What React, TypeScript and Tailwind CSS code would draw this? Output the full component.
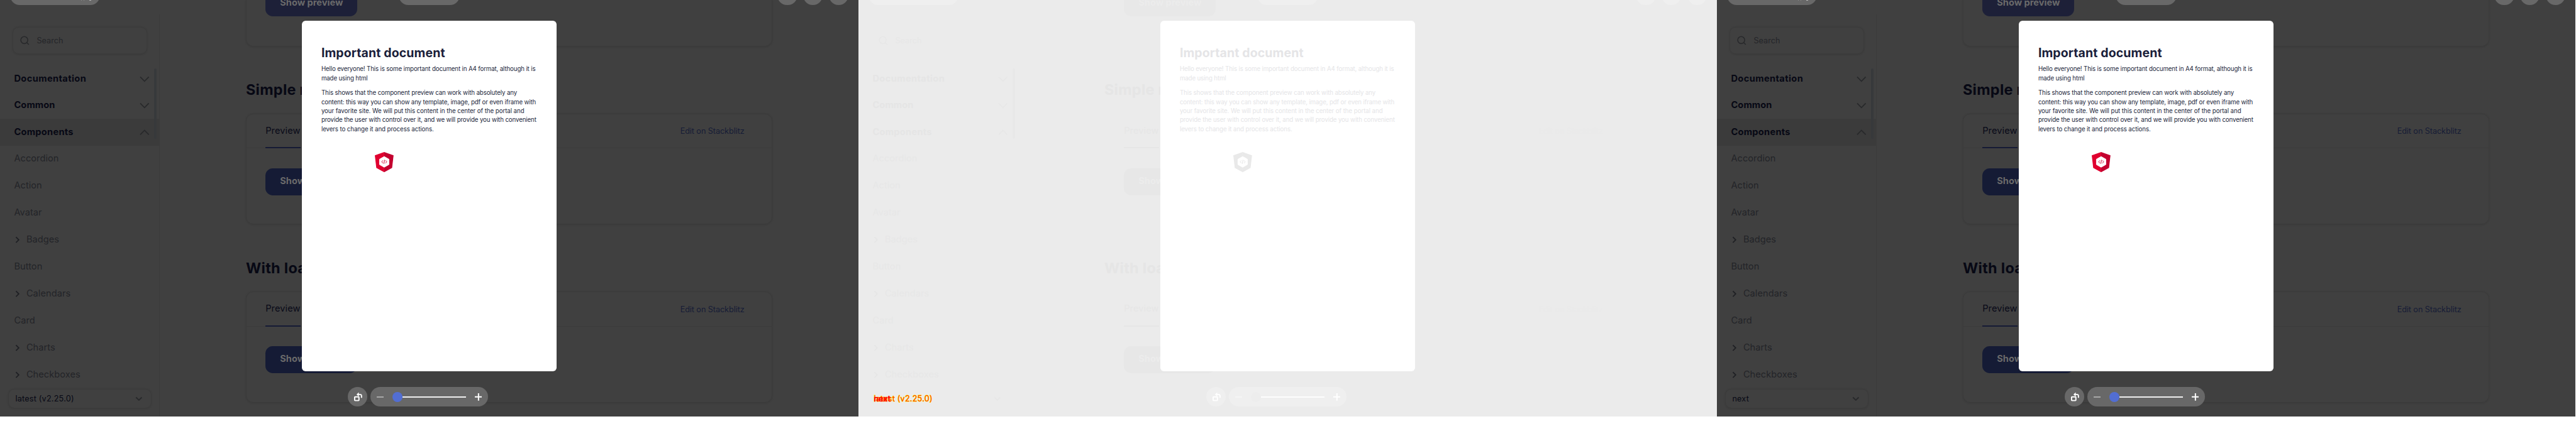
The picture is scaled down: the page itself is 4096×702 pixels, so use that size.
type Tone = "dark" | "light";

const tones = {
  dark: {
    page: "bg-[#404040]",
    line: "border-[#3b3b3b]",
    shadow: "shadow-[0_1px_3px_rgba(0,0,0,0.12)]",
    strong: "text-[#070814]",
    item: "text-[#232428]",
    search: "text-[#242529]",
    icon: "text-[#28292b]",
    caret: "text-[#1f2024]",
    active: "bg-[#3b3b3b]",
    thumb: "bg-[#37393b]",
    tab: "text-[#090a18]",
    underline: "bg-[#151b35]",
    button: "bg-[#151b35] text-[#6a6a6a]",
    buttonHover: "bg-[#1d2038] text-[#6a6a6a]",
    link: "text-[#161c36]",
    chip: "bg-[#686868]",
    doc: "text-[#1b1f3b]",
    minus: "bg-[#a8a8a8]",
    track: "bg-[#f0f0f0]",
    knob: "bg-[#526ed3]",
  },
  light: {
    page: "bg-[#ebebeb]",
    line: "border-transparent",
    shadow: "shadow-none",
    strong: "text-[#e5e5e5]",
    item: "text-[#e7e7e7]",
    search: "text-[#e7e7e7]",
    icon: "text-[#e7e7e7]",
    caret: "text-[#e6e6e6]",
    active: "bg-transparent",
    thumb: "bg-[#e8e8e8]",
    tab: "text-[#e6e6e6]",
    underline: "bg-[#e6e6e6]",
    button: "bg-[#e7e7e7] text-[#ececec]",
    buttonHover: "bg-[#e8e8e8] text-[#ececec]",
    link: "text-[#eaeaea]",
    chip: "bg-[#efefef]",
    doc: "text-[#e5e5e7]",
    minus: "bg-[#f5f5f5]",
    track: "bg-[#fdfdfd]",
    knob: "bg-[#ededed]",
  },
};

function Chevron({ up }: { up?: boolean }) {
  return (
    <svg className="h-[10px] w-[16px]" viewBox="0 0 16 10" fill="none" stroke="currentColor" strokeWidth="1.8">
      <path d={up ? "M1 8.5 8 1.5l7 7" : "M1 1.5l7 7 7-7"} />
    </svg>
  );
}

function Caret() {
  return (
    <svg className="h-[12px] w-[8px]" viewBox="0 0 8 12" fill="none" stroke="currentColor" strokeWidth="1.8">
      <path d="M1.5 1.5 6 6l-4.500 4.500" />
    </svg>
  );
}

const groups = [
  { name: "Documentation", cls: "h-[43px] tracking-[0.41px]", up: false },
  { name: "Common", cls: "h-[43px] tracking-[0.1px]", up: false },
  { name: "Components", cls: "h-[44px] tracking-[0.28px]", up: true },
];

const items = [
  { name: "Accordion", sub: false },
  { name: "Action", sub: false },
  { name: "Avatar", sub: false },
  { name: "Badges", sub: true },
  { name: "Button", sub: false },
  { name: "Calendars", sub: true },
  { name: "Card", sub: false },
  { name: "Charts", sub: true },
  { name: "Checkboxes", sub: true },
];

function Version({ kind }: { kind: string }) {
  if (kind === "diff")
    return (
      <span className="grid text-[13px] leading-[18px] tracking-[0.21px]">
        <span className="col-start-1 row-start-1 text-[#ff3c00] [-webkit-text-stroke:0.9px_#ffee00] [paint-order:stroke_fill]">latest (v2.25.0)</span>
        <span className="col-start-1 row-start-1 text-[#ff0000] [-webkit-text-stroke:0.7px_#ff0000]">next</span>
      </span>
    );
  return <span className="text-[13px] leading-[18px] tracking-[0.21px]">{kind}</span>;
}

function Sidebar({ tone, version }: { tone: Tone; version: string }) {
  const t = tones[tone];
  return (
    <aside className={`relative mt-[24px] flex w-[261px] shrink-0 flex-col border-r pt-[20px] ${t.line}`}>
      <div className={`ml-[20px] flex h-[44px] w-[220px] items-center rounded-[10px] border pl-[12px] ${t.line} ${t.shadow}`}>
        <svg className={`h-[16px] w-[16px] ${t.icon}`} viewBox="0 0 16 16" fill="none" stroke="currentColor" strokeWidth="1.6">
          <circle cx="6.800" cy="7" r="5.700" />
          <path d="M11 11.200 14.200 14.400" />
        </svg>
        <span className={`ml-[11px] text-[13px] tracking-[-0.02px] ${t.search}`}>Search</span>
      </div>
      <nav className="mt-[20px]">
        {groups.map((g) => (
          <div key={g.name} className={`flex items-center justify-between pr-[16px] pl-[23px] text-[15px] font-bold ${g.cls} ${t.strong} ${g.up ? t.active : ""}`}>
            {g.name}
            <span className={t.icon}>
              <Chevron up={g.up} />
            </span>
          </div>
        ))}
        {items.map((i) => (
          <div key={i.name} className={`flex h-[44px] items-center pl-[23px] text-[15px] tracking-[0.04px] ${t.item}`}>
            {i.sub && (
              <span className={`mr-[10px] ml-[2px] ${t.caret}`}>
                <Caret />
              </span>
            )}
            {i.name}
          </div>
        ))}
      </nav>
      <div className={`mt-[1px] ml-[13px] flex h-[32px] w-[234px] items-center justify-between rounded-[10px] border pr-[13px] pl-[11px] ${t.line} ${t.shadow} ${t.strong}`}>
        <Version kind={version} />
        <svg className={`h-[8px] w-[12px] ${t.icon}`} viewBox="0 0 12 8" fill="none" stroke="currentColor" strokeWidth="2">
          <path d="M1.300 1.500 6 6l4.700-4.500" />
        </svg>
      </div>
      <div className={`absolute top-[88px] left-[251px] h-[115px] w-[4px] rounded-full ${t.thumb}`} />
    </aside>
  );
}

function Section({ tone, title }: { tone: Tone; title: string }) {
  const t = tones[tone];
  return (
    <section>
      <div className="h-[109.5px] pt-[52.5px]">
        <h2 className={`text-[24px] leading-[36px] font-bold tracking-[0.3px] ${t.strong}`}>{title}</h2>
      </div>
      <div className={`h-[181px] rounded-[12px] border ${t.line} ${t.shadow}`}>
        <div className={`flex h-[56px] items-stretch justify-between border-b pr-[45px] pl-[31px] ${t.line}`}>
          <div className="-mb-px flex flex-col justify-between">
            <span className={`pt-[17.5px] text-[15px] leading-[20px] tracking-[0.08px] ${t.tab}`}>Preview</span>
            <span className={`h-[2px] w-[57px] ${t.underline}`} />
          </div>
          <span className={`pt-[18px] text-[13px] leading-[20px] tracking-[-0.08px] ${t.link}`}>Edit on Stackblitz</span>
        </div>
        <div className={`mt-[32px] ml-[31px] flex h-[44px] w-[150px] items-center justify-center rounded-[12px] text-[15px] font-bold ${t.button}`}>Show preview</div>
      </div>
    </section>
  );
}

const paragraphs = [
  [
    { text: "Hello everyone! This is some important document in A4 format, although it is", cls: "tracking-[-0.16px]" },
    { text: "made using html", cls: "tracking-[-0.16px]" },
  ],
  [
    { text: "This shows that the component preview can work with absolutely any", cls: "tracking-[-0.14px]" },
    { text: "content: this way you can show any template, image, pdf or even iframe with", cls: "tracking-[-0.16px]" },
    { text: "your favorite site. We will put this content in the center of the portal and", cls: "tracking-[-0.09px]" },
    { text: "provide the user with control over it, and we will provide you with convenient", cls: "tracking-[-0.14px]" },
    { text: "levers to change it and process actions.", cls: "tracking-[-0.11px]" },
  ],
];

function Logo({ tone }: { tone: Tone }) {
  const d = tone === "dark";
  return (
    <svg className="mt-[30px] ml-[87px] h-[33px] w-[31px]" viewBox="0 0 31 33">
      <path d="M15.300 0 0 5.400 2.400 25.800 15.300 33z" fill={d ? "#e0002f" : "#e9e9e9"} />
      <path d="M15.300 0 30.600 5.400 28.200 25.800 15.300 33z" fill={d ? "#c3002f" : "#e9e9e9"} />
      <path d="M15.300 7.400 23 11.700v8.800l-7.700 4.300-7.700-4.300v-8.800z" fill="#fff" stroke="#fff" strokeWidth="1" strokeLinejoin="round" />
      <path d="M13.200 13.700 11.300 16l1.900 2.300M17.500 13.700l1.900 2.300-1.900 2.300M15.900 12.800l-1.100 6.400" fill="none" stroke={d ? "#d0002f" : "#e3e3e3"} strokeWidth="1" />
    </svg>
  );
}

function Panel({ tone, version }: { tone: Tone; version: string }) {
  const t = tones[tone];
  return (
    <div className={`relative flex h-[680px] w-[1400px] shrink-0 overflow-hidden ${t.page}`}>
      <Sidebar tone={tone} version={version} />
      <main className="ml-[140px] w-[859px]">
        <div className={`flex h-[76px] rounded-b-[12px] border border-t-0 pl-[31px] ${t.line} ${t.shadow}`}>
          <div className={`-mt-[17px] flex h-[44px] w-[150px] items-center justify-center rounded-[12px] text-[15px] font-bold ${t.buttonHover}`}>Show preview</div>
        </div>
        <Section tone={tone} title="Simple modal" />
        <Section tone={tone} title="With loading" />
      </main>

      <header className="absolute top-[-24px] left-0 flex h-[32px] w-full items-stretch pr-[16px] pl-[16px]">
        <div className={`flex w-[147px] items-end rounded-full pb-[7px] pl-[116px] ${t.chip}`}>
          {tone === "dark" && (
            <span className="flex gap-[3px]">
              <i className="h-[1px] w-[1px] bg-[#8a8a8a]" />
              <i className="h-[1px] w-[1px] bg-[#8a8a8a]" />
              <i className="ml-[6px] h-[1px] w-[3px] bg-[#b5b5b5]" />
            </span>
          )}
        </div>
        <div className={`ml-[487px] w-[100px] rounded-full ${t.chip}`} />
        <div className="ml-auto flex gap-[10px]">
          <div className={`w-[32px] rounded-full ${t.chip}`} />
          <div className={`w-[32px] rounded-full ${t.chip}`} />
          <div className={`w-[32px] rounded-full ${t.chip}`} />
        </div>
      </header>

      <article className={`absolute top-[34px] left-[492px] h-[572px] w-[416px] rounded-[6px] bg-white pt-[40px] pl-[32px] ${t.doc}`}>
        <h1 className="text-[20px] leading-[26px] font-bold tracking-[0.11px]">Important document</h1>
        {paragraphs.map((p, i) => (
          <p key={i} className={`text-[10px] leading-[14.67px] whitespace-nowrap ${i ? "mt-[9.7px]" : "mt-[6px]"}`}>
            {p.map((l) => (
              <span key={l.text} className={`block ${l.cls}`}>{l.text}</span>
            ))}
          </p>
        ))}
        <Logo tone={tone} />
      </article>

      <footer className="absolute top-[632px] left-[567px] flex h-[32px] gap-[5px]">
        <div className={`flex w-[32px] items-center justify-center rounded-full ${t.chip}`}>
          <svg className="h-[16px] w-[16px]" viewBox="0 0 16 16" fill="none" stroke="#fff" strokeWidth="2">
            <rect x="3" y="8" width="7" height="6" rx="0.800" />
            <path d="M14.200 9.500V6.500Q14.200 4 11.500 4H8" />
            <path d="M6 4 9.800 0.600V7.400z" fill="#fff" stroke="none" />
          </svg>
        </div>
        <div className={`flex w-[192px] items-center rounded-full pl-[10px] ${t.chip}`}>
          <span className={`h-[2px] w-[12px] ${t.minus}`} />
          <span className={`ml-[14px] h-[16px] w-[16px] rounded-full ${t.knob}`} />
          <span className={`h-[2px] w-[104px] ${t.track}`} />
          <svg className="ml-[14px] h-[12px] w-[12px]" viewBox="0 0 12 12" stroke="#fff" strokeWidth="2">
            <path d="M6 0v12M0 6h12" />
          </svg>
        </div>
      </footer>
    </div>
  );
}

export default function App() {
  return (
    <div className="flex h-[720px] w-[4200px] items-start bg-white font-['Inter',sans-serif] [zoom:0.975]">
      <Panel tone="dark" version="latest (v2.25.0)" />
      <Panel tone="light" version="diff" />
      <Panel tone="dark" version="next" />
    </div>
  );
}
